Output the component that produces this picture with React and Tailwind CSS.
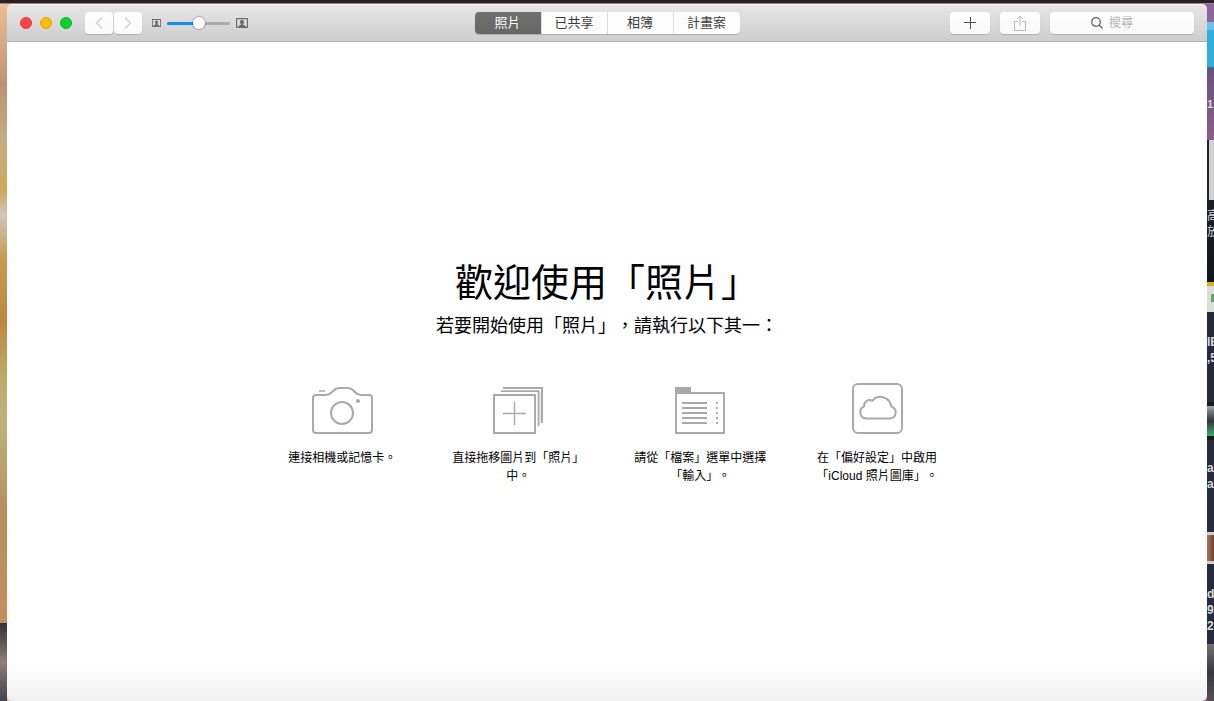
import React, { useState } from "react";

const TABS = ["照片", "已共享", "相簿", "計畫案"];

const TOOL_BUTTON =
  "flex h-[22px] items-center justify-center rounded bg-gradient-to-b from-white to-[#fafafa] shadow-[0_1px_1px_rgba(0,0,0,0.18)]";

function CameraIcon() {
  return (
    <svg width="60" height="52" viewBox="0 0 60 52" fill="none" stroke="#a9a9a9" strokeWidth="2" className="overflow-visible">
      <path d="M4 13h10c4 0 5-2 7-4s3-3 6-3h9c3 0 4 1 6 3s3 4 7 4h8a3 3 0 0 1 3 3v32a3 3 0 0 1-3 3H4a3 3 0 0 1-3-3V16a3 3 0 0 1 3-3z" />
      <circle cx="30" cy="31" r="11" />
      <circle cx="46" cy="19" r="2" fill="#a9a9a9" stroke="none" />
      <path d="M7 9h6" strokeWidth="1.5" />
    </svg>
  );
}

function StackIcon() {
  return (
    <svg width="50" height="52" viewBox="0 0 50 52" fill="none" stroke="#a9a9a9" strokeWidth="2">
      <path d="M10 6h39v35" />
      <path d="M46.5 10v32h1.5v-32z" fill="#e4e4e4" stroke="none" />
      <path d="M8 9.2h37.5v35" strokeWidth="1.7" />
      <rect x="1" y="13" width="41" height="38" fill="#fff" />
      <path d="M10 31.5h23M21.5 20v23" strokeWidth="1.4" />
    </svg>
  );
}

function FolderIcon() {
  return (
    <svg width="50" height="52" viewBox="0 0 50 52" fill="none" stroke="#a9a9a9" strokeWidth="2">
      <path d="M0 5h16v6H0z" fill="#a9a9a9" stroke="none" />
      <rect x="1" y="11" width="48" height="40" />
      <path d="M7 21h25M7 26h25M7 31h25M7 36h25M7 41h25" />
      <path d="M41 21h2M41 26h2M41 31h2M41 36h2M41 41h2" />
    </svg>
  );
}

function CloudIcon() {
  return (
    <svg width="51" height="52" viewBox="0 0 51 52" fill="none" stroke="#a9a9a9" strokeWidth="2">
      <rect x="1" y="2" width="49" height="49" rx="5" />
      <path d="M13.8 36.5A6.4 6.4 0 0 1 12.1 24.3A5.6 5.6 0 0 1 20.3 18.8A10.8 10.8 0 0 1 39.3 24.6A6.1 6.1 0 0 1 38.2 36.5z" />
    </svg>
  );
}

function PortraitIcon({ width, height }) {
  return (
    <svg width={width} height={height} viewBox="0 0 12 9" preserveAspectRatio="none" aria-hidden="true">
      <rect x="0.5" y="0.5" width="11" height="8" fill="none" stroke="#6b6b6b" strokeWidth="1.2" />
      <path d="M6 1.6c1.3 0 2 .9 2 2 0 .8-.4 1.400-.9 1.8v.6l2.400.9V8h-7V6.900L4.900 6v-.6C4.400 5 4 4.400 4 3.600c0-1.100.7-2 2-2z" fill="#6b6b6b" />
    </svg>
  );
}

const STEPS = [
  { Icon: CameraIcon, lines: ["連接相機或記憶卡。"] },
  { Icon: StackIcon, lines: ["直接拖移圖片到「照片」", "中。"] },
  { Icon: FolderIcon, lines: ["請從「檔案」選單中選擇", "「輸入」。"] },
  { Icon: CloudIcon, lines: ["在「偏好設定」中啟用", "「iCloud 照片圖庫」。"] },
];

// The slice of desktop icons that shows past the right edge of the window
function DesktopEdge() {
  return (
    <div className="flex w-[7px] shrink-0 flex-col overflow-hidden whitespace-nowrap bg-[#20222e] text-[12px] leading-4 font-bold text-[#d8d8dc]">
      <div className="h-[18px] shrink-0 bg-[#8d659c]" />
      <div className="h-2 shrink-0 bg-[#68c4e8]" />
      <div className="h-[38px] shrink-0 border-b border-[#247ba6] bg-[#30afdc]" />
      <div className="flex h-[72px] shrink-0 items-center bg-gradient-to-b from-[#68527d] to-[#8c5c8c] text-[11px]">
        1
      </div>
      <div className="ml-0.5 h-[60px] shrink-0 bg-[#d2d2d2]" />
      <div className="h-[82px] shrink-0 bg-gradient-to-b from-[#1e1e28] to-[#10151c] pt-2 font-normal">
        <div>高</div>
        <div>放</div>
      </div>
      <div className="h-[30px] shrink-0 border-t-4 border-[#d6b512] bg-[#dadcd7] pt-2">
        <div className="ml-1 h-2 bg-[#58aa63]" />
      </div>
      <div className="h-[90px] shrink-0 bg-[#272a3b] pt-[22px]">
        <div>IE</div>
        <div>,5</div>
      </div>
      <div className="h-[38px] shrink-0 border-t-4 border-b-4 border-[#191919] bg-gradient-to-b from-[#a2a8ad] via-[#30343c] to-[#32af75]" />
      <div className="h-[92px] shrink-0 bg-[#282b3d] pt-5">
        <div>an</div>
        <div>a</div>
      </div>
      <div className="h-8 shrink-0 border-y-[3px] border-[#d6d1cc] bg-gradient-to-r from-[#ad7659] to-[#6e4132]" />
      <div className="h-20 shrink-0 bg-[#262b40] pt-[22px]">
        <div>d</div>
        <div>97</div>
        <div>2,0</div>
      </div>
      <div className="flex-1 bg-gradient-to-b from-[#77706f] via-[#373743] to-[#55504f]" />
    </div>
  );
}

function Toolbar() {
  const [tab, setTab] = useState("照片");
  const [zoom, setZoom] = useState(50);

  return (
    <header className="flex h-[38px] shrink-0 items-center rounded-t-[5px] border-t border-b border-t-[#f6f6f6] border-b-[#b1b1b1] bg-gradient-to-b from-[#e6e6e6] to-[#cecece] px-[13px]">
      <div className="flex flex-1 items-center">
        <div className="flex gap-2">
          <button type="button" aria-label="關閉" className="size-3 rounded-full border border-[#e33e3b] bg-[#ff4343]" />
          <button type="button" aria-label="縮到最小" className="size-3 rounded-full border border-[#e0a30b] bg-[#ffbd00]" />
          <button type="button" aria-label="放大" className="size-3 rounded-full border border-[#0db526] bg-[#00d52c]" />
        </div>
        <div className="ml-[13px] flex gap-px">
          <button type="button" aria-label="上一頁" className={`${TOOL_BUTTON} w-7`}>
            <svg width="8" height="12" viewBox="0 0 8 12" fill="none" stroke="#cfcfcf" strokeWidth="1.3">
              <path d="M7 .5 1.5 6 7 11.5" />
            </svg>
          </button>
          <button type="button" aria-label="下一頁" className={`${TOOL_BUTTON} w-7`}>
            <svg width="8" height="12" viewBox="0 0 8 12" fill="none" stroke="#cfcfcf" strokeWidth="1.3">
              <path d="M1 .5 6.5 6 1 11.5" />
            </svg>
          </button>
        </div>
        <div className="ml-[10px] flex items-center gap-[6px]">
          <PortraitIcon width={9} height={8} />
          <input
            type="range"
            aria-label="縮圖大小"
            value={zoom}
            onChange={(e) => setZoom(Number(e.target.value))}
            style={{ backgroundImage: `linear-gradient(to right, #0a8fff ${zoom}%, #acacac ${zoom}%)` }}
            className="h-[3px] w-[63px] appearance-none rounded-full [&::-webkit-slider-thumb]:size-3 [&::-webkit-slider-thumb]:appearance-none [&::-webkit-slider-thumb]:rounded-full [&::-webkit-slider-thumb]:bg-white [&::-webkit-slider-thumb]:shadow-[0_0_1px_1px_rgba(0,0,0,0.22)]"
          />
          <PortraitIcon width={12} height={10} />
        </div>
      </div>

      <nav className="flex h-[22px] divide-x divide-[#dcdcdc] overflow-hidden rounded bg-[#fcfcfc] text-[13px] leading-[22px] text-[#3c3c3c] shadow-[0_1px_1px_rgba(0,0,0,0.18)]">
        {TABS.map((name) => (
          <button
            key={name}
            type="button"
            onClick={() => setTab(name)}
            className={
              name === tab
                ? "w-[67px] bg-gradient-to-b from-[#707070] to-[#666666] text-white"
                : "w-[66px]"
            }
          >
            {name}
          </button>
        ))}
      </nav>

      <div className="flex flex-1 justify-end gap-[10px]">
        <button type="button" aria-label="加入" className={`${TOOL_BUTTON} w-10`}>
          <svg width="12" height="12" viewBox="0 0 12 12" stroke="#4d4d4d">
            <path d="M6.5 0v12M0 5.5h12" />
          </svg>
        </button>
        <button type="button" aria-label="分享" className={`${TOOL_BUTTON} w-10`}>
          <svg width="12" height="16" viewBox="0 0 12 16" fill="none" stroke="#b9b9b9">
            <path d="M4 6.5H.5v9h11v-9H8M6 11V1M3 4l3-3 3 3" />
          </svg>
        </button>
        <label className={`${TOOL_BUTTON} w-36 gap-[6px]`}>
          <svg width="12" height="12" viewBox="0 0 12 12" fill="none" stroke="#5c5c5c" strokeWidth="1.2">
            <circle cx="5" cy="5" r="4.3" />
            <path d="m8 8 3.5 3.5" />
          </svg>
          <input
            type="search"
            aria-label="搜尋"
            placeholder="搜尋"
            className="w-11 text-[12px] outline-none placeholder:text-[#b4b4b4]"
          />
        </label>
      </div>
    </header>
  );
}

export default function App() {
  return (
    <div
      lang="zh-Hant"
      className="flex min-h-screen flex-col bg-gradient-to-r from-[#e9b990] from-50% to-[#8d659c] to-50% font-['Liberation_Sans','Noto_Sans_CJK_TC',sans-serif] [text-spacing-trim:space-all]"
    >
      <div className="h-[3px] shrink-0 bg-[#242124]" />
      <div className="h-px shrink-0 bg-[#a67f83]" />
      <div className="flex flex-1">
        <div className="flex w-[7px] shrink-0 flex-col">
          <div className="flex-1 bg-[linear-gradient(to_bottom,#efbd96_0%,#bd9273_13%,#c3ad83_22%,#d0a65b_30%,#d3c4bb_34%,#c59e50_41%,#bd8640_51%,#bfa968_60%,#bfb17b_68%,#b58f59_82%,#c58d5d_100%)]" />
          <div className="h-[78px] shrink-0 bg-gradient-to-b from-[#34313b] via-[#8e7f75] to-[#40444f]" />
        </div>

        <div className="flex min-w-0 flex-1 flex-col">
          <Toolbar />
          <main className="flex flex-1 flex-col items-center justify-center rounded-b-[5px] bg-[linear-gradient(to_top,#f0f0f0,#ffffff_40px)] text-black">
            <h1 className="text-[38px] leading-[48px] font-normal">歡迎使用「照片」</h1>
            <p className="mt-[7px] text-[18px] leading-6">若要開始使用「照片」，請執行以下其一：</p>
            <ul className="mt-[44px] flex gap-[50px] pl-[6px]">
              {STEPS.map(({ Icon, lines }) => (
                <li key={lines[0]} className="flex min-w-[120px] flex-col items-center">
                  <Icon />
                  <p className="mt-[15px] text-center text-[12px] leading-[18px] whitespace-nowrap">
                    {lines.map((line) => (
                      <span key={line} className="block">
                        {line}
                      </span>
                    ))}
                  </p>
                </li>
              ))}
            </ul>
          </main>
        </div>

        <DesktopEdge />
      </div>
    </div>
  );
}
